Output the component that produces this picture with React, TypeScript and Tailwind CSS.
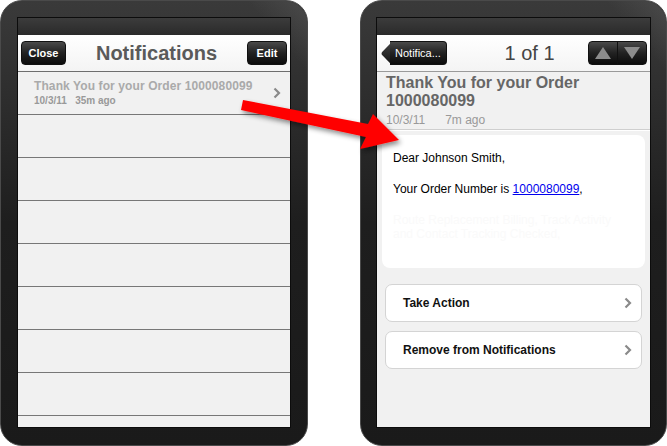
import { ReactNode } from "react"

const font = { fontFamily: '"Liberation Sans", Arial, sans-serif' }

function Chevron({ className = "" }: { className?: string }) {
  return (
    <svg width="8" height="12" viewBox="0 0 8 12" className={className}>
      <path d="M1.5 1.5 L6 6 L1.5 10.5" fill="none" stroke="#8a8a8a" strokeWidth="2.2" />
    </svg>
  )
}

function Phone({ children, className = "" }: { children: ReactNode; className?: string }) {
  return (
    <div
      className={`relative h-[446px] rounded-[22px] border border-[#4a4a4a] bg-gradient-to-b from-[#3a3a3a] via-[#1e1e1e] to-[#1a1a1a] pt-[16px] pb-[17px] ${className}`}
    >
      <div className="pointer-events-none absolute right-0 top-0 h-[70px] w-[60px] rounded-tr-[22px] bg-gradient-to-bl from-[#555]/60 via-transparent to-transparent" />
      <div className="relative flex h-full flex-col overflow-hidden border border-[#0c0c0c] bg-[#f1f1f1]">
        <div className="h-[17px] bg-gradient-to-b from-[#3c3c3c] to-[#2a2a2a]" />
        {children}
      </div>
    </div>
  )
}

function DarkButton({ children, className = "" }: { children: ReactNode; className?: string }) {
  return (
    <div
      className={`flex h-[24px] items-center justify-center rounded-[4px] border border-[#111] bg-gradient-to-b from-[#4a4a4a] via-[#222] to-[#0c0c0c] text-[11px] font-bold text-white ${className}`}
    >
      {children}
    </div>
  )
}

function ListScreen() {
  const empty = [0, 1, 2, 3, 4, 5, 6]
  return (
    <>
      <div className="flex h-[37px] items-center justify-between border-b border-[#6e6e6e] bg-gradient-to-b from-white to-[#f4f4f4] px-[3px]">
        <DarkButton className="w-[45px]">Close</DarkButton>
        <span className="text-[20px] font-bold text-[#5a5a5a]">Notifications</span>
        <DarkButton className="w-[40px]">Edit</DarkButton>
      </div>
      <div className="flex h-[43px] items-center justify-between border-b border-[#777] pl-[16px] pr-[9px]">
        <div className="flex flex-col leading-none">
          <span className="text-[12px] font-bold tracking-[0.1px] text-[#aaa]">
            Thank You for your Order 1000080099
          </span>
          <span className="mt-[4px] text-[10px] font-bold text-[#999]">
            10/3/11&nbsp;&nbsp;&nbsp;35m ago
          </span>
        </div>
        <Chevron />
      </div>
      {empty.map((i) => (
        <div key={i} className="h-[43px] shrink-0 border-b border-[#777]" />
      ))}
    </>
  )
}

function DetailScreen() {
  return (
    <>
      <div className="flex h-[37px] items-center justify-between border-b border-[#9a9a9a] bg-gradient-to-b from-white to-[#f4f4f4] pl-[4px] pr-[3px]">
        <div className="relative flex h-[24px] w-[66px] items-center">
          <div className="absolute left-[3px] top-[3.5px] h-[17px] w-[17px] rotate-45 rounded-[3px] bg-gradient-to-br from-[#444] to-[#111]" />
          <DarkButton className="relative ml-[9px] w-[57px] rounded-l-none border-l-0 font-normal">
            Notifica...
          </DarkButton>
        </div>
        <span className="ml-[24px] text-[20px] text-[#444]">1 of 1</span>
        <div className="flex h-[24px] w-[59px] overflow-hidden rounded-[4px] border border-[#111] bg-gradient-to-b from-[#4a4a4a] via-[#222] to-[#0c0c0c]">
          <div className="flex flex-1 items-center justify-center border-r border-[#111]">
            <svg width="18" height="14" viewBox="0 0 18 14">
              <path d="M9 1 L17 13 L1 13 Z" fill="#8c8c8c" />
            </svg>
          </div>
          <div className="flex flex-1 items-center justify-center">
            <svg width="18" height="14" viewBox="0 0 18 14">
              <path d="M1 1 L17 1 L9 13 Z" fill="#8c8c8c" />
            </svg>
          </div>
        </div>
      </div>
      <div className="border-b border-[#cfcfcf] px-[9px] pb-[2px] pt-[2px] shadow-[0_1px_0_#fff]">
        <div className="text-[16px] font-bold leading-[18px] text-[#666]">
          Thank You for your Order
          <br />
          1000080099
        </div>
        <div className="mt-[3px] text-[12px] leading-[14px] text-[#999]">
          10/3/11&nbsp;&nbsp;&nbsp;&nbsp;&nbsp;&nbsp;7m ago
        </div>
      </div>
      <div className="flex flex-1 flex-col px-[5px] pt-[5px]">
        <div className="h-[133px] rounded-[8px] bg-white px-[11px] pt-[16px] text-[12px] leading-[14px] text-black">
          <p>Dear Johnson Smith,</p>
          <p className="mt-[17px]">
            Your Order Number is <span className="text-[#0000ee] underline">1000080099</span>,
          </p>
          <p className="mt-[17px] pr-[4px] text-[#fafafa]">
            Route Replacement Billing, Track Activity and Contact Tracking Checked,
          </p>
        </div>
        <div className="mt-[16px] flex flex-col gap-[9px] px-[3px]">
          {["Take Action", "Remove from Notifications"].map((label) => (
            <div
              key={label}
              className="flex h-[38px] items-center justify-between rounded-[7px] border border-[#d4d4d4] bg-white pl-[17px] pr-[9px]"
            >
              <span className="text-[12px] font-bold text-[#111]">{label}</span>
              <Chevron />
            </div>
          ))}
        </div>
      </div>
    </>
  )
}

export default function App() {
  return (
    <div className="relative flex h-[446px] w-[667px] justify-between bg-white" style={font}>
      <Phone className="w-[308px] px-[16px]">
        <ListScreen />
      </Phone>
      <Phone className="w-[307px] px-[15px]">
        <DetailScreen />
      </Phone>
      <svg className="pointer-events-none absolute left-0 top-0" width="667" height="446">
        <defs>
          <filter id="sh" x="-20%" y="-20%" width="140%" height="140%">
            <feDropShadow dx="2" dy="3" stdDeviation="2.5" floodColor="#000" floodOpacity="0.45" />
          </filter>
        </defs>
        <path
          d="M243 100 L368 124 L373 114 L399 140 L360 149 L366 137 L241 110 Z"
          fill="#ff0000"
          filter="url(#sh)"
        />
      </svg>
    </div>
  )
}
